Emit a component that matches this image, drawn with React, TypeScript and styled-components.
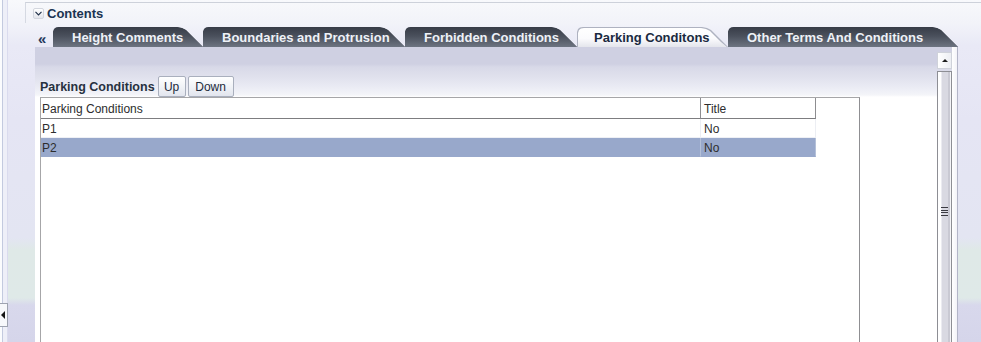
import React from "react";
import styled, { createGlobalStyle } from "styled-components";

const Global = createGlobalStyle`
  html, body { margin: 0; padding: 0; background: #fbfcfe; }
  body { font-family: "Liberation Sans", Arial, sans-serif; }
  * { box-sizing: border-box; }
`;

const Page = styled.div`
  display: flex;
  width: 981px;
  height: 342px;
  overflow: hidden;
`;

const Splitter = styled.div`
  position: relative;
  flex: none;
  width: 8px;
  background: linear-gradient(to right, #fbfcfe 0 2px, #c3cadf 2px 3px, #eeeff8 3px 7px, #dadbee 7px 8px);
`;

const CollapseHandle = styled.div`
  position: absolute;
  left: 0;
  top: 303px;
  width: 8px;
  height: 24px;
  background: #f7f8fb;
  border: 1px solid #9ea3b0;
  border-left: none;
  display: flex;
  align-items: center;
  &::after {
    content: "";
    margin-left: 1px;
    border-style: solid;
    border-width: 4px 4px 4px 0;
    border-color: transparent #151515 transparent transparent;
  }
`;

const Main = styled.div`
  flex: 1;
  display: flex;
  flex-direction: column;
  background: linear-gradient(
    to bottom,
    #f8f9fc 0px,
    #f1f2f9 26px,
    #e9e9f6 45px,
    #e5e5f4 120px,
    #e3e5f2 238px,
    #dfe9e7 250px,
    #dfe9e8 298px,
    #d8d8ec 305px,
    #d5d5ea 342px
  );
`;

const HeaderBar = styled.div`
  display: flex;
  align-items: center;
  height: 21px;
  margin: 2px 0 0 17px;
  padding-left: 7px;
  border-top: 1px solid #cdd1da;
  border-left: 1px solid #d5d9e2;
  background: linear-gradient(to bottom, #f7f8fb, #f2f3f9);
`;

const Disclosure = styled.div`
  width: 11px;
  height: 11px;
  margin-top: 1px;
  border: 1px solid #d3d6de;
  border-radius: 2px;
  background: linear-gradient(to bottom, #ffffff, #e3e5ec);
  display: flex;
  align-items: center;
  justify-content: center;
`;

const HeaderTitle = styled.span`
  margin-left: 3px;
  font-size: 13px;
  font-weight: bold;
  color: #1b3452;
`;

const TabStrip = styled.div`
  display: flex;
  align-items: flex-end;
  height: 20px;
  margin-top: 4px;
  padding-left: 30px;
`;

const Chevron = styled.span`
  width: 15px;
  height: 20px;
  line-height: 24px;
  font-size: 15px;
  font-weight: bold;
  color: #24385a;
`;

const tabShape = `polygon(0 100%, 0 5px, 1px 2px, 3px 0.5px, 6px 0, calc(100% - 26px) 0, calc(100% - 21px) 1px, calc(100% - 17px) 3px, calc(100% - 12px) 8px, calc(100% - 6px) 14px, 100% 100%)`;

const Tab = styled.div<{ $w: number; $active?: boolean }>`
  position: relative;
  flex: none;
  width: ${(p) => p.$w}px;
  height: 20px;
  padding-left: ${(p) => (p.$active ? 17 : 19)}px;
  clip-path: ${tabShape};
  background: ${(p) => (p.$active ? "#aeb2c0" : "#3d424d")};
  font-size: 13px;
  font-weight: bold;
  line-height: 22px;
  white-space: nowrap;
  color: ${(p) => (p.$active ? "#1a2a40" : "#eef1f7")};
  &::before {
    content: "";
    position: absolute;
    inset: ${(p) => (p.$active ? "1px 1px 0 1px" : "0")};
    clip-path: ${tabShape};
    background: ${(p) =>
      p.$active
        ? "linear-gradient(to bottom, #ffffff 0%, #fbfbfd 55%, #e4e5ec 100%)"
        : "linear-gradient(to bottom, #373c47 0%, #4a505c 45%, #6d7481 100%)"};
  }
`;

const TabLabel = styled.span`
  position: relative;
`;

const Body = styled.div`
  flex: 1;
  display: flex;
  min-height: 0;
`;

const Panel = styled.div`
  display: flex;
  width: 923px;
  margin-left: 27px;
  border-right: 1px solid #b3b5c8;
  background: linear-gradient(
    to bottom,
    #cfd0e2 0px,
    #cfd0e2 17px,
    #d8d9e8 20px,
    #e0e1ed 30px,
    #eaebf4 40px,
    #f4f5f9 48px,
    #ffffff 50px
  );
`;

const PanelContent = styled.div`
  flex: 1;
  display: flex;
  flex-direction: column;
  padding: 29px 0 0 5px;
  min-width: 0;
`;

const Toolbar = styled.div`
  display: flex;
  align-items: center;
  height: 21px;
  gap: 2px;
`;

const ToolbarLabel = styled.span`
  font-size: 12.5px;
  font-weight: bold;
  color: #27313f;
  margin-right: 1px;
  padding-top: 1px;
`;

const ToolButton = styled.button<{ $w: number }>`
  width: ${(p) => p.$w}px;
  height: 21px;
  padding: 0;
  border: 1px solid #a9afbd;
  border-radius: 2px;
  background: linear-gradient(to bottom, #ffffff, #f1f3f7 50%, #e2e5ee);
  font-family: "Liberation Sans", Arial, sans-serif;
  font-size: 12px;
  color: #1d2a3b;
`;

const TableBox = styled.div`
  flex: 1;
  width: 820px;
  border: 1px solid #a6a6a8;
  border-bottom: none;
  border-right-color: #8f8f92;
  background: #ffffff;
`;

const Row = styled.div<{ $header?: boolean }>`
  display: grid;
  grid-template-columns: 660px 115px;
  height: ${(p) => (p.$header ? 21 : 19)}px;
  font-size: 12px;
  color: #2d2d2d;
`;

const Cell = styled.div<{ $header?: boolean; $selected?: boolean; $pad: number }>`
  display: flex;
  align-items: center;
  padding: 2px 0 0 ${(p) => p.$pad}px;
  white-space: nowrap;
  background: ${(p) => (p.$selected ? "#98a8cb" : "transparent")};
  border-right: 1px solid
    ${(p) => (p.$header ? "#8d8d90" : p.$selected ? "#b4c0d8" : "#eceef3")};
  border-bottom: 1px solid
    ${(p) => (p.$header ? "#7d7d80" : p.$selected ? "#98a8cb" : "#eef0f5")};
`;

const Scrollbar = styled.div`
  flex: none;
  width: 15px;
  margin-top: 5px;
  display: flex;
  flex-direction: column;
`;

const ScrollButton = styled.div`
  height: 17px;
  border: 1px solid #cfd2da;
  background: linear-gradient(to right, #ffffff, #eceef3);
  display: flex;
  align-items: center;
  justify-content: center;
  &::after {
    content: "";
    border-style: solid;
    border-width: 0 3px 3px 3px;
    border-color: transparent transparent #1e1e1e transparent;
  }
`;

const ScrollThumb = styled.div`
  flex: 1;
  margin-top: 2px;
  border: 1px solid #8d8e94;
  border-bottom: none;
  background: linear-gradient(
    to right,
    #ffffff 0 3px,
    #ebebf1 3px 4px,
    #d9d9e2 4px 10px,
    #c9c9d3 10px 12px,
    #f4f4f7 12px
  );
  display: flex;
  justify-content: center;
  padding-top: 135px;
`;

const Grip = styled.div`
  width: 7px;
  height: 9px;
  margin-right: 1px;
  background: repeating-linear-gradient(to bottom, #3b3b42 0 1px, transparent 1px 2.5px);
`;

const ScrollGap = styled.div`
  flex: none;
  width: 5px;
  background: linear-gradient(to right, #ffffff, #f3f3f8);
`;

const Gutter = styled.div`
  flex: 1;
`;

const tabs = [
  { label: "Height Comments", w: 150 },
  { label: "Boundaries and Protrusion", w: 202 },
  { label: "Forbidden Conditions", w: 172 },
  { label: "Parking Conditons", w: 151, active: true },
  { label: "Other Terms And Conditions", w: 230 },
];

const rows = [
  { name: "P1", title: "No" },
  { name: "P2", title: "No", selected: true },
];

export default function App() {
  return (
    <>
      <Global />
      <Page>
        <Splitter>
          <CollapseHandle />
        </Splitter>
        <Main>
          <HeaderBar>
            <Disclosure>
              <svg width="7" height="5" viewBox="0 0 7 5">
                <path d="M0.5 0.8 L3.5 4 L6.5 0.8" fill="none" stroke="#1f2f48" strokeWidth="1.1" />
              </svg>
            </Disclosure>
            <HeaderTitle>Contents</HeaderTitle>
          </HeaderBar>
          <TabStrip>
            <Chevron>«</Chevron>
            {tabs.map((t) => (
              <Tab key={t.label} $w={t.w} $active={t.active}>
                <TabLabel>{t.label}</TabLabel>
              </Tab>
            ))}
          </TabStrip>
          <Body>
            <Panel>
              <PanelContent>
                <Toolbar>
                  <ToolbarLabel>Parking Conditions</ToolbarLabel>
                  <ToolButton $w={28}>Up</ToolButton>
                  <ToolButton $w={46}>Down</ToolButton>
                </Toolbar>
                <TableBox>
                  <Row $header>
                    <Cell $header $pad={1}>Parking Conditions</Cell>
                    <Cell $header $pad={3}>Title</Cell>
                  </Row>
                  {rows.map((r) => (
                    <Row key={r.name}>
                      <Cell $selected={r.selected} $pad={1}>{r.name}</Cell>
                      <Cell $selected={r.selected} $pad={3}>{r.title}</Cell>
                    </Row>
                  ))}
                </TableBox>
              </PanelContent>
              <Scrollbar>
                <ScrollButton />
                <ScrollThumb>
                  <Grip />
                </ScrollThumb>
              </Scrollbar>
              <ScrollGap />
            </Panel>
            <Gutter />
          </Body>
        </Main>
      </Page>
    </>
  );
}
